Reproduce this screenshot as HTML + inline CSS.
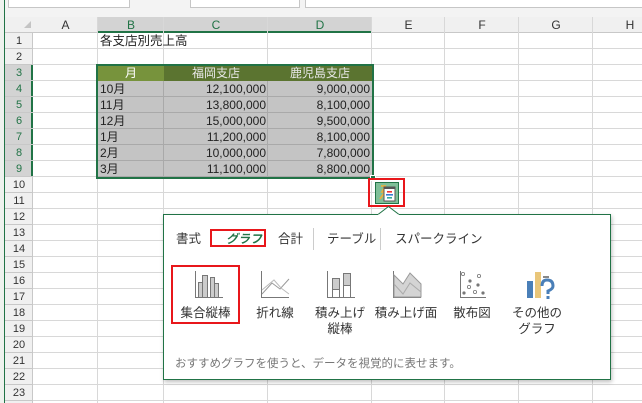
<!DOCTYPE html>
<html><head><meta charset="utf-8">
<style>
*{margin:0;padding:0;box-sizing:border-box}
body{width:642px;height:403px;overflow:hidden;background:#fff;position:relative;font-family:"Liberation Sans","Noto Sans CJK JP",sans-serif;font-size:12px;color:#222}
.a{position:absolute}
.t{position:absolute;white-space:nowrap;line-height:16px}
</style></head><body>
<div class="a" style="left:0;top:0;width:642px;height:17px;background:#f3f3f3"></div>
<div class="a" style="left:8px;top:-1px;width:122px;height:9px;background:#fff;border:1px solid #c6c6c6"></div>
<div class="a" style="left:190px;top:-1px;width:110px;height:9px;background:#fff;border:1px solid #c6c6c6"></div>
<div class="a" style="left:305px;top:-1px;width:340px;height:9px;background:#fff;border:1px solid #c6c6c6"></div>
<div class="a" style="left:0;top:0;width:5px;height:403px;background:#eef2ee"></div>
<div class="a" style="left:4px;top:0;width:1px;height:403px;background:#217346"></div>

<div class="a" style="left:5px;top:17px;width:637px;height:16px;background:#f0f0f0;border-bottom:1px solid #c8c8c8"></div>
<div class="a" style="left:98px;top:17px;width:274px;height:16px;background:#d3d3d3;border-bottom:2px solid #217346"></div>
<div class="a" style="left:5px;top:33px;width:28px;height:370px;background:#f0f0f0;border-right:1px solid #c8c8c8"></div>
<div class="a" style="left:5px;top:65px;width:28px;height:112px;background:#d3d3d3;border-right:2px solid #217346"></div>
<div class="a" style="left:33px;top:33px;width:609px;height:370px;background:repeating-linear-gradient(to bottom,transparent 0,transparent 15px,#d8d8d8 15px,#d8d8d8 16px)"></div>
<div class="a" style="left:5px;top:33px;width:28px;height:370px;background:repeating-linear-gradient(to bottom,transparent 0,transparent 15px,#c8c8c8 15px,#c8c8c8 16px)"></div>
<div class="a" style="left:97px;top:17px;width:1px;height:386px;background:#d8d8d8"></div>
<div class="a" style="left:163px;top:17px;width:1px;height:386px;background:#d8d8d8"></div>
<div class="a" style="left:267px;top:17px;width:1px;height:386px;background:#d8d8d8"></div>
<div class="a" style="left:371px;top:17px;width:1px;height:386px;background:#d8d8d8"></div>
<div class="a" style="left:444px;top:17px;width:1px;height:386px;background:#d8d8d8"></div>
<div class="a" style="left:518px;top:17px;width:1px;height:386px;background:#d8d8d8"></div>
<div class="a" style="left:592px;top:17px;width:1px;height:386px;background:#d8d8d8"></div>
<div class="a" style="left:24px;top:21px;width:0;height:0;border-left:7px solid transparent;border-bottom:7px solid #c4c4c4"></div>

<div class="t" style="left:33px;top:17px;width:65px;text-align:center;color:#333">A</div>
<div class="t" style="left:98px;top:17px;width:66px;text-align:center;color:#217346">B</div>
<div class="t" style="left:164px;top:17px;width:104px;text-align:center;color:#217346">C</div>
<div class="t" style="left:268px;top:17px;width:104px;text-align:center;color:#217346">D</div>
<div class="t" style="left:372px;top:17px;width:73px;text-align:center;color:#333">E</div>
<div class="t" style="left:445px;top:17px;width:74px;text-align:center;color:#333">F</div>
<div class="t" style="left:519px;top:17px;width:74px;text-align:center;color:#333">G</div>
<div class="t" style="left:593px;top:17px;width:74px;text-align:center;color:#333">H</div>

<div class="a" style="left:5px;top:33px;width:28px;font-size:11px;line-height:16px;text-align:center;color:#333">
<div>1</div><div>2</div><div style="color:#217346">3</div><div style="color:#217346">4</div><div style="color:#217346">5</div><div style="color:#217346">6</div><div style="color:#217346">7</div><div style="color:#217346">8</div><div style="color:#217346">9</div><div>10</div><div>11</div><div>12</div><div>13</div><div>14</div><div>15</div><div>16</div><div>17</div><div>18</div><div>19</div><div>20</div><div>21</div><div>22</div><div>23</div>
</div>

<div class="t" style="left:100px;top:33px;font-size:12.5px">各支店別売上高</div>

<div class="a" style="left:98px;top:66px;width:274px;height:111px;background:#c4c4c4"></div>
<div class="a" style="left:98px;top:66px;width:66px;height:15px;background:#77933c"></div>
<div class="a" style="left:164px;top:66px;width:208px;height:15px;background:#5b7430"></div>
<div class="a" style="left:98px;top:81px;width:274px;height:96px;background:repeating-linear-gradient(to bottom,transparent 0,transparent 15px,#a9a9a9 15px,#a9a9a9 16px)"></div>
<div class="a" style="left:163px;top:81px;width:1px;height:96px;background:#a9a9a9"></div>
<div class="a" style="left:267px;top:81px;width:1px;height:96px;background:#a9a9a9"></div>
<div class="a" style="left:98px;top:177px;width:274px;height:1px;background:#fff"></div>
<div class="a" style="left:96px;top:64px;width:278px;height:115px;border:2px solid #217346"></div>
<div class="a" style="left:370px;top:175px;width:6px;height:6px;background:#217346;border:1px solid #fff"></div>
<div class="t" style="left:98px;top:65px;width:66px;text-align:center;color:#fff">月</div>
<div class="t" style="left:164px;top:65px;width:104px;text-align:center;color:#e8e8e8">福岡支店</div>
<div class="t" style="left:268px;top:65px;width:104px;text-align:center;color:#e8e8e8">鹿児島支店</div>
<div class="a" style="left:100px;top:81px;line-height:16px;font-size:12px"><div>10月</div><div>11月</div><div>12月</div><div>1月</div><div>2月</div><div>3月</div></div>
<div class="a" style="left:164px;top:81px;width:102px;text-align:right;line-height:16px;font-size:12px"><div>12,100,000</div><div>13,800,000</div><div>15,000,000</div><div>11,200,000</div><div>10,000,000</div><div>11,100,000</div></div>
<div class="a" style="left:268px;top:81px;width:102px;text-align:right;line-height:16px;font-size:12px"><div>9,000,000</div><div>8,100,000</div><div>9,500,000</div><div>8,100,000</div><div>7,800,000</div><div>8,800,000</div></div>

<!-- quick analysis button -->
<div class="a" style="left:368px;top:178px;width:37px;height:29px;border:2px solid #e8171b"></div>
<div class="a" style="left:375px;top:182px;width:24px;height:22px;background:#7fbf98;border:1px solid #217346"></div>
<svg class="a" style="left:375px;top:182px" width="24" height="22"><path d="M6 4 L10 4 L7 10 L10 10 L5 17" fill="none" stroke="#e8b040" stroke-width="1.8"/><rect x="9" y="5" width="11" height="14" fill="#fff" stroke="#555" stroke-width="1"/><rect x="9" y="5" width="11" height="2" fill="#555"/><rect x="12" y="9" width="5" height="1.6" fill="#e33"/><rect x="11" y="12" width="7" height="1.6" fill="#3a7bd5"/><rect x="12" y="15" width="5" height="1.6" fill="#3a9"/></svg>

<!-- popup -->
<div class="a" style="left:163px;top:214px;width:448px;height:166px;background:#fff;border:1px solid #217346;box-shadow:1px 2px 4px rgba(0,0,0,.25)"></div>
<svg class="a" style="left:378px;top:206px" width="21" height="10"><path d="M0 8.5 L10.5 0.5 L21 8.5" fill="#fff" stroke="#217346" stroke-width="1"/><rect x="0" y="8.5" width="21" height="2" fill="#fff"/></svg>

<div class="t" style="left:176px;top:231px;font-size:12.5px;color:#333">書式</div>
<div class="a" style="left:210px;top:229px;width:56px;height:18px;border:2px solid #e8171b"></div>
<div class="t" style="left:226px;top:231px;font-size:12px;color:#217346;font-weight:bold;font-style:italic">グラフ</div>
<div class="t" style="left:278px;top:231px;font-size:12.5px;color:#333">合計</div>
<div class="a" style="left:313px;top:228px;width:1px;height:22px;background:#ccc"></div>
<div class="t" style="left:327px;top:231px;font-size:12.5px;color:#333">テーブル</div>
<div class="a" style="left:380px;top:228px;width:1px;height:22px;background:#ccc"></div>
<div class="t" style="left:395px;top:231px;font-size:12.5px;color:#333">スパークライン</div>

<div class="a" style="left:171px;top:265px;width:69px;height:59px;border:2px solid #e8171b"></div>
<svg class="a" style="left:0;top:0" width="642" height="403">
<g stroke="#777" stroke-width="1" fill="#ccc">
<path d="M195.5 271 V297.5 H223" fill="none"/>
<rect x="198.5" y="282.5" width="4" height="15"/><rect x="202.5" y="275.5" width="5" height="22"/>
<rect x="210.5" y="277.5" width="4" height="20"/><rect x="214.5" y="283.5" width="4" height="14"/>
<path d="M261.5 271 V297.5 H289" fill="none"/>
<path d="M262 294 L272 283 L280 289 L289 279" fill="none" stroke="#999"/>
<path d="M262 290 L274 280 L281 288 L289 294" fill="none" stroke="#bbb"/>
<path d="M327.5 271 V297.5 H355" fill="none"/>
<rect x="332.5" y="278.5" width="7" height="19" fill="#fff"/><rect x="332.5" y="278.5" width="7" height="11"/>
<rect x="343.5" y="273.5" width="7" height="24" fill="#fff"/><rect x="343.5" y="273.5" width="7" height="12"/>
<path d="M393.5 271 V297.5 H421" fill="none"/>
<path d="M394 275 L403 284 L410 273 L421 284 L421 297 L394 297 Z" fill="#d4d4d4" stroke="#999"/>
<path d="M394 284 L403 294 L410 283 L421 292" fill="none" stroke="#aaa"/>
<path d="M460.5 271 V297.5 H486" fill="none"/>
</g>
<g fill="#777"><circle cx="463" cy="274" r="1.6" fill="none" stroke="#777" stroke-width="0.8"/><circle cx="470" cy="281" r="1.6"/><circle cx="479" cy="276" r="1.6" fill="none" stroke="#777" stroke-width="0.8"/><circle cx="478" cy="285" r="1.6"/><circle cx="469" cy="287" r="1.6" fill="none" stroke="#777" stroke-width="0.8"/><circle cx="464" cy="293" r="1.6"/><circle cx="475" cy="292" r="1.6" fill="none" stroke="#777" stroke-width="0.8"/><circle cx="483" cy="293" r="1.6"/></g>
<rect x="527" y="281" width="6" height="17" fill="#4a7fb8"/>
<rect x="535" y="272" width="6" height="26" fill="#e9c67a"/>
<rect x="543" y="276" width="6" height="2" fill="#888"/>
<path d="M542 286 Q542 280 547 280 Q553 280 553 286 Q553 289 548 291 L548 294" fill="none" stroke="#4a7fb8" stroke-width="3"/>
<rect x="546.5" y="296" width="3" height="3" fill="#4a7fb8"/>
</svg>
<div class="t" style="left:171px;top:305px;width:69px;text-align:center;font-size:12.5px;color:#333">集合縦棒</div>
<div class="t" style="left:245px;top:305px;width:60px;text-align:center;font-size:12.5px;color:#333">折れ線</div>
<div class="t" style="left:310px;top:305px;width:60px;text-align:center;font-size:12.5px;color:#333;line-height:16px">積み上げ<br>縦棒</div>
<div class="t" style="left:373px;top:305px;width:66px;text-align:center;font-size:12.5px;color:#333">積み上げ面</div>
<div class="t" style="left:442px;top:305px;width:60px;text-align:center;font-size:12.5px;color:#333">散布図</div>
<div class="t" style="left:507px;top:305px;width:60px;text-align:center;font-size:12.5px;color:#333;line-height:16px">その他の<br>グラフ</div>

<div class="t" style="left:175px;top:356px;font-size:11.5px;color:#777">おすすめグラフを使うと、データを視覚的に表せます。</div>
</body></html>
